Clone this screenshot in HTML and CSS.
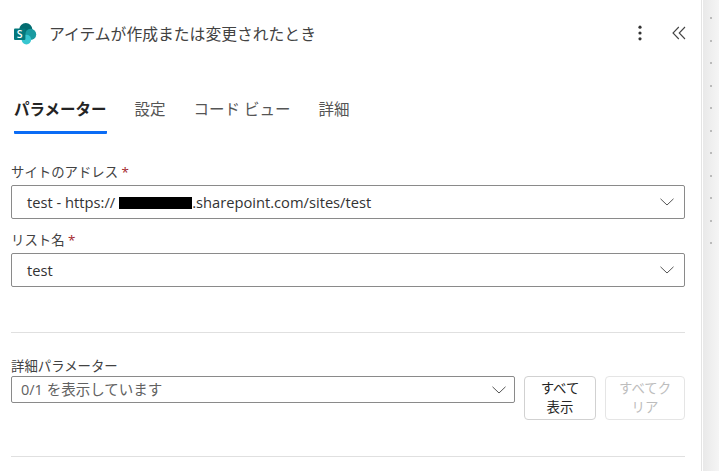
FILE: index.html
```html
<!DOCTYPE html>
<html lang="ja">
<head>
<meta charset="utf-8">
<title>アイテムが作成または変更されたとき</title>
<link rel="stylesheet" href="styles.css">
</head>
<body>
<div class="page">
  <main class="panel">
    <header class="head">
      <svg class="logo" viewBox="0 0 24 24" width="24" height="24" aria-hidden="true">
        <circle cx="12.8" cy="7.6" r="6.6" fill="#036c70"/>
        <circle cx="17.6" cy="12.4" r="5.6" fill="#1a9ba1"/>
        <circle cx="13.4" cy="17.6" r="4.8" fill="#37c6d0"/>
        <rect x="1" y="6.6" width="11.4" height="11.4" rx="1" fill="#03787c"/>
        <text x="6.7" y="15.8" class="logo-s">S</text>
      </svg>
      <h1 class="title">アイテムが作成または変更されたとき</h1>
      <div class="head-actions">
        <svg class="more" viewBox="0 0 4 16" width="4" height="16" aria-hidden="true">
          <circle cx="2" cy="2.2" r="1.6"/><circle cx="2" cy="8" r="1.6"/><circle cx="2" cy="13.8" r="1.6"/>
        </svg>
        <svg class="collapse" viewBox="0 0 14 14" width="14" height="14" aria-hidden="true">
          <path d="M6.8 1 L1 7 L6.8 13 M13 1 L7.2 7 L13 13"/>
        </svg>
      </div>
    </header>
    <nav class="tabs">
      <a class="tab active">パラメーター</a>
      <a class="tab">設定</a>
      <a class="tab">コード ビュー</a>
      <a class="tab">詳細</a>
    </nav>
    <section class="fields">
      <label class="label">サイトのアドレス <span class="req">*</span></label>
      <div class="select">
        <span class="value">test - https://<span class="redact"></span>.sharepoint.com/sites/test</span>
        <svg class="chev" viewBox="0 0 14 8" width="14" height="8" aria-hidden="true"><path d="M.5 .8 L7 7 L13.5 .8"/></svg>
      </div>
      <label class="label second">リスト名 <span class="req">*</span></label>
      <div class="select">
        <span class="value">test</span>
        <svg class="chev" viewBox="0 0 14 8" width="14" height="8" aria-hidden="true"><path d="M.5 .8 L7 7 L13.5 .8"/></svg>
      </div>
    </section>
    <hr class="rule first-rule">
    <section class="advanced">
      <label class="label adv-label">詳細パラメーター</label>
      <div class="adv-row">
        <div class="select small">
          <span class="value muted">0/1 を表示しています</span>
          <svg class="chev" viewBox="0 0 14 8" width="14" height="8" aria-hidden="true"><path d="M.5 .8 L7 7 L13.5 .8"/></svg>
        </div>
        <button class="btn">すべて表示</button>
        <button class="btn disabled" disabled>すべてクリア</button>
      </div>
    </section>
    <hr class="rule second-rule">
  </main>
  <aside class="rail">
    <i></i><i></i><i></i><i></i><i></i><i></i><i></i><i></i><i></i><i></i><i></i>
  </aside>
</div>
</body>
</html>
```
FILE: styles.css
```css
* { box-sizing: border-box; }
html, body { margin: 0; height: 100%; overflow: hidden; background: #fff; }
body {
  font-family: "Open Sans", "Noto Sans CJK JP", sans-serif;
  color: #242424;
}
.page { display: flex; width: 719px; height: 471px; }
.panel { width: 701px; padding: 0 16px 0 11px; }
.head { display: flex; align-items: center; height: 66px; padding-left: 2px; }
.logo { flex: none; margin-right: 12px; margin-top: 1px; }
.logo-s { font: 600 10.5px "Open Sans", sans-serif; fill: #fff; text-anchor: middle; }
.title { margin: 0; font-size: 15.8px; font-weight: 400; color: #424242; flex: 1; }
.head-actions { display: flex; align-items: center; gap: 30px; margin-right: -1px; }
.more { fill: #333; }
.collapse { fill: none; stroke: #444; stroke-width: 1.1; }
.tabs { display: flex; gap: 28px; height: 68px; padding: 32px 0 0 3px; }
.tab { height: 36px; font-size: 15.5px; line-height: 22px; color: #555; white-space: nowrap; }
.tab.active { font-weight: 700; color: #242424; border-bottom: 3px solid #0b6cf5; border-radius: 1px; }
.fields { padding-top: 29px; }
.label { display: block; font-size: 13.4px; line-height: 18px; color: #424242; }
.label.second { margin-top: 12px; }
.req { color: #a4262c; }
.select {
  display: flex; align-items: center; justify-content: space-between;
  height: 34px; margin-top: 4px; padding: 0 10px 0 15px;
  border: 1px solid #8a8a8a; border-radius: 2px; background: #fff;
}
.value { font-size: 14.7px; color: #333; white-space: nowrap; }
.redact { display: inline-block; width: 73px; height: 12px; margin-left: 4px; background: #000; vertical-align: -1px; }
.muted { color: #616161; }
.chev { fill: none; stroke: #555; stroke-width: 1; flex: none; }
.rule { height: 1px; margin: 0; border: 0; background: #e0e0e0; }
.first-rule { margin-top: 45px; }
.advanced { padding-top: 23px; }
.adv-label { line-height: 20px; }
.adv-row { display: flex; align-items: flex-start; }
.select.small { width: 504px; height: 27px; margin: 0; padding: 0 8px 3px 9px; }
.small .chev { margin-top: 3px; }
.small .value { font-size: 14.5px; }
.btn {
  width: 72px; height: 44px; margin-left: 9px; padding: 0 10px;
  font: 400 13.4px/19px "Open Sans", "Noto Sans CJK JP", sans-serif;
  color: #242424; background: #fff;
  border: 1px solid #d1d1d1; border-radius: 4px;
}
.btn.disabled { width: 80px; padding: 0 12px; color: #bdbdbd; border-color: #e5e5e5; }
.second-rule { margin-top: 36px; }
.rail {
  width: 18px; padding-top: 17px;
  display: flex; flex-direction: column; align-items: center; gap: 20.5px;
  background: linear-gradient(to right, #fff 1px, #e9e9e9 1px, #f5f5f5);
  border-left: 1px solid #e4e4e4;
}
.rail i { display: block; width: 2px; height: 2px; background: #bbb; flex: none; }
```
